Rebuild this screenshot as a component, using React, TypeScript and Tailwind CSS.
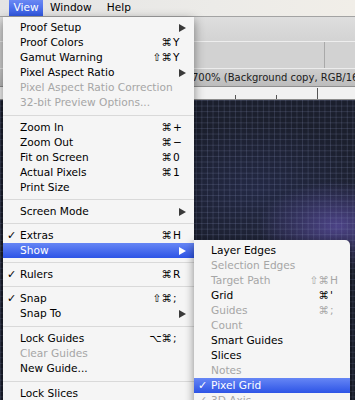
import React from 'react';

/* ── Menu data ──────────────────────────── */
type Entry = {
  label?: string;
  sep?: '9' | '10';
  disabled?: boolean;
  checked?: boolean;
  mods?: string;
  k?: string;
  sub?: boolean;
  active?: boolean;
};

const viewMenu: Entry[] = [
  { label: 'Proof Setup', sub: true },
  { label: 'Proof Colors', mods: '⌘', k: 'Y' },
  { label: 'Gamut Warning', mods: '⇧⌘', k: 'Y' },
  { label: 'Pixel Aspect Ratio', sub: true },
  { label: 'Pixel Aspect Ratio Correction', disabled: true },
  { label: '32-bit Preview Options...', disabled: true },
  { sep: '10' },
  { label: 'Zoom In', mods: '⌘', k: '+' },
  { label: 'Zoom Out', mods: '⌘', k: '−' },
  { label: 'Fit on Screen', mods: '⌘', k: '0' },
  { label: 'Actual Pixels', mods: '⌘', k: '1' },
  { label: 'Print Size' },
  { sep: '9' },
  { label: 'Screen Mode', sub: true },
  { sep: '9' },
  { label: 'Extras', checked: true, mods: '⌘', k: 'H' },
  { label: 'Show', sub: true, active: true },
  { sep: '9' },
  { label: 'Rulers', checked: true, mods: '⌘', k: 'R' },
  { sep: '9' },
  { label: 'Snap', checked: true, mods: '⇧⌘', k: ';' },
  { label: 'Snap To', sub: true },
  { sep: '10' },
  { label: 'Lock Guides', mods: '⌥⌘', k: ';' },
  { label: 'Clear Guides', disabled: true },
  { label: 'New Guide...' },
  { sep: '10' },
  { label: 'Lock Slices' },
];

const showMenu: Entry[] = [
  { label: 'Layer Edges' },
  { label: 'Selection Edges', disabled: true },
  { label: 'Target Path', disabled: true, mods: '⇧⌘', k: 'H' },
  { label: 'Grid', mods: '⌘', k: "'" },
  { label: 'Guides', disabled: true, mods: '⌘', k: ';' },
  { label: 'Count', disabled: true },
  { label: 'Smart Guides' },
  { label: 'Slices' },
  { label: 'Notes', disabled: true },
  { label: 'Pixel Grid', checked: true, active: true },
  { label: '3D Axis', checked: true, disabled: true },
];

/* ── Pieces ─────────────────────────────── */
function Arrow({ white }: { white?: boolean }) {
  return (
    <svg width="7" height="8" viewBox="0 0 7 8" className="shrink-0">
      <polygon points="0,0 7,4 0,8" fill={white ? '#ffffff' : '#3a3a3a'} />
    </svg>
  );
}

function Row({ it, sub }: { it: Entry; sub?: boolean }) {
  if (it.sep) {
    return (
      <div className={`flex items-center ${it.sep === '10' ? 'h-[10px]' : 'h-[9px]'}`}>
        <div className="h-px w-full bg-[#d9d9d9]" />
      </div>
    );
  }
  const tone = it.active
    ? 'bg-[linear-gradient(#6686f5,#2d54e6)] text-white'
    : it.disabled
      ? 'text-[#a6a6a6]'
      : 'text-black';
  return (
    <div className={`flex h-[15px] items-center pl-[4px] ${sub ? 'pr-[9px]' : 'pr-[8px]'} ${tone}`}>
      <span className="w-[13px] text-[11px] leading-none font-bold">{it.checked ? '✓' : ''}</span>
      <span className="flex-1 whitespace-nowrap">{it.label}</span>
      {it.k && (
        <span className="flex whitespace-nowrap">
          <span>{it.mods}</span>
          <span className={`pl-[1px] ${sub ? 'w-[12px]' : 'w-[14px]'}`}>{it.k}</span>
        </span>
      )}
      {it.sub && <Arrow white={it.active} />}
    </div>
  );
}

/* ── Page ───────────────────────────────── */
export default function App() {
  return (
    <div className="relative flex h-[400px] w-[355px] flex-col overflow-hidden bg-[#262626] font-['DejaVu_Sans',sans-serif] text-[10.6px]">
      {/* Menu bar */}
      <div className="flex h-[17px] shrink-0 items-center border-b border-[#a3a3a3] bg-[linear-gradient(90deg,#e4e4e4,#ecebe8_60%,#f1eee8)] text-black">
        <div className="ml-[9px] flex h-full w-[34px] items-center justify-center bg-[linear-gradient(#6a88f3,#3159e4)] text-white">
          View
        </div>
        <span className="ml-[7px]">Window</span>
        <span className="ml-[15px]">Help</span>
      </div>

      {/* App window behind the menus */}
      <div className="flex flex-1">
        <div className="flex w-[3px] flex-col">
          <div className="h-[83px] bg-[#b2b2b2]" />
          <div className="flex-1 bg-[#2a2a2a]" />
        </div>
        <div className="flex flex-1 flex-col">
          <div className="h-[25px] border-b border-[#eeeeee] bg-[linear-gradient(#dedede,#d3d3d3)]" />
          <div className="flex h-[27px] border-b border-[#ececec] bg-[#d2d2d2]">
            <div className="w-[324px]" />
            <div className="w-px bg-[#a9a9a9]" />
          </div>
          <div className="flex h-[18px] items-center border-b border-[#8e8e8e] bg-[linear-gradient(#cecece,#bcbcbc)] pl-[192px] text-[10px] whitespace-nowrap text-[#1c1c1c]">
            700% (Background copy, RGB/16*)
          </div>
          <div className="flex h-[13px] items-end border-b border-[#8a8a8a] bg-[#f1f1f1]">
            <div className="ml-[193px] h-[5px] w-px bg-[#555]" />
            <div className="ml-[41px] h-[4px] w-px bg-[#555]" />
            <div className="ml-[40px] h-[4px] w-px bg-[#555]" />
            <div className="ml-[40px] h-[11px] w-px bg-[#555]" />
          </div>
          <div className="flex-1 bg-[#1b1f2d] bg-[linear-gradient(rgba(140,150,190,0.2)_1px,transparent_1px),linear-gradient(90deg,rgba(140,150,190,0.2)_1px,transparent_1px),radial-gradient(ellipse_80px_45px_at_92%_42%,rgba(115,95,205,0.55),transparent),radial-gradient(ellipse_120px_70px_at_70%_30%,rgba(60,70,140,0.25),transparent)] bg-[length:5.6px_5.6px,5.6px_5.6px,100%_100%,100%_100%]" />
        </div>
      </div>

      {/* View menu */}
      <div className="absolute top-[17px] left-[3px] w-[191px] bg-[#f5f5f5] pt-[3px] pb-[10px] shadow-[0_3px_10px_rgba(0,0,0,0.45)]">
        {viewMenu.map((it, i) => (
          <Row key={i} it={it} />
        ))}
      </div>

      {/* Show submenu */}
      <div className="absolute top-[240px] left-[194px] w-[156px] rounded-tr-[5px] bg-[#f5f5f5] pt-[3px] pb-[6px] shadow-[0_3px_10px_rgba(0,0,0,0.45)]">
        {showMenu.map((it, i) => (
          <Row key={i} it={it} sub />
        ))}
      </div>
    </div>
  );
}
